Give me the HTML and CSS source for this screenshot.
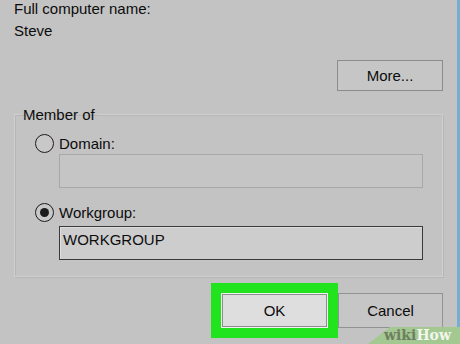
FILE: index.html
```html
<!DOCTYPE html>
<html lang="en">

<head>
  <meta charset="UTF-8">
  <meta name="viewport" content="width=device-width, initial-scale=1.0">
  <title>Computer Name Changes</title>
  <link rel="stylesheet" href="styles.css">
</head>

<body>
  <div class="dialog">
    <p class="label">Full computer name:</p>
    <p class="value">Steve</p>

    <div class="more-row">
      <button type="button" class="btn btn-more">More...</button>
    </div>

    <fieldset class="group">
      <legend>Member of</legend>

      <label class="option">
        <span class="radio"></span>Domain:
      </label>
      <div class="field field-disabled"></div>

      <label class="option option-workgroup">
        <span class="radio checked"></span>Workgroup:
      </label>
      <div class="field field-active">WORKGROUP</div>
    </fieldset>

    <div class="actions">
      <button type="button" class="btn btn-ok">OK</button>
      <button type="button" class="btn btn-cancel">Cancel</button>
    </div>

    <div class="watermark"><span class="wiki">wiki</span><span class="how">How</span></div>
  </div>
</body>

</html>
```

FILE: styles.css
```css
body {
  margin: 0;
  padding: 0;
  width: 460px;
  height: 344px;
  overflow: hidden;
  background-color: #c3c3c3;
  font-family: "Liberation Sans", Arial, sans-serif;
  font-size: 15px;
  line-height: 17px;
  color: #0c0c0c;
}

.dialog {
  position: relative;
  box-sizing: border-box;
  width: 460px;
  height: 344px;
  padding: 0 14px;
  border-right: 3px solid #76aed0;
}

.label,
.value {
  margin: 0;
}

.value {
  margin-top: 5px;
}

.more-row {
  display: flex;
  justify-content: flex-end;
  margin-top: 21px;
}

.btn {
  box-sizing: border-box;
  font-family: inherit;
  font-size: 15px;
  color: #0c0c0c;
  padding: 0;
  cursor: pointer;
}

.btn-more {
  width: 106px;
  height: 31px;
  background-color: #c6c6c6;
  border: 1px solid #8c8c8c;
}

.group {
  margin: 15px 0 0 0;
  padding: 11px 19px 16px 20px;
  border: 1px solid #d0d0d0;
  box-shadow: 1px 1px 0 #b6b6b6, inset 1px 1px 0 #b6b6b6;
}

.group legend {
  margin-left: -14px;
  padding: 0 2px;
  line-height: 17px;
}

.option {
  display: flex;
  align-items: center;
  height: 18px;
}

.option-workgroup {
  margin-top: 15px;
}

.radio {
  box-sizing: border-box;
  width: 19px;
  height: 19px;
  margin-right: 5px;
  border: 1.3px solid #1c1c1c;
  border-radius: 50%;
  background-color: #c8c8c8;
  display: flex;
  justify-content: center;
  align-items: center;
}

.radio.checked::after {
  content: "";
  width: 9px;
  height: 9px;
  border-radius: 50%;
  background-color: #1c1c1c;
}

.field {
  box-sizing: border-box;
  height: 34px;
  margin-left: 24px;
  padding: 4px 3px;
}

.field-disabled {
  margin-top: 2px;
  background-color: #c5c5c5;
  border: 1px solid #a8a8a8;
}

.field-active {
  margin-top: 5px;
  background-color: #cdcdcd;
  border: 1px solid #3a3a3a;
  box-shadow: inset 1px 1px 0 #dedede;
}

.actions {
  display: flex;
  justify-content: flex-end;
  gap: 10px;
  margin-top: 16px;
}

.btn-ok {
  width: 107px;
  height: 35px;
  background-color: #dedede;
  border: 1px solid #f2f2f2;
  box-shadow: inset 0 0 0 1px #8e8e8e, 0 0 0 10px #21e41f;
}

.btn-cancel {
  position: relative;
  width: 105px;
  height: 35px;
  background-color: #c6c6c6;
  border: 1px solid #929292;
}

/* watermark sits over the bottom right corner */
.watermark {
  position: absolute;
  right: -3px;
  bottom: 0;
  width: 92px;
  height: 17px;
  padding-left: 16px;
  box-sizing: border-box;
  background-color: #a4c892;
  clip-path: polygon(22px 0, 100% 0, 100% 100%, 0 100%);
  font-family: "DejaVu Serif", serif;
  font-weight: bold;
  font-size: 14px;
  line-height: 17px;
  white-space: nowrap;
}

.wiki {
  color: #6e7f61;
}

.how {
  color: #f2f6ec;
}
```
